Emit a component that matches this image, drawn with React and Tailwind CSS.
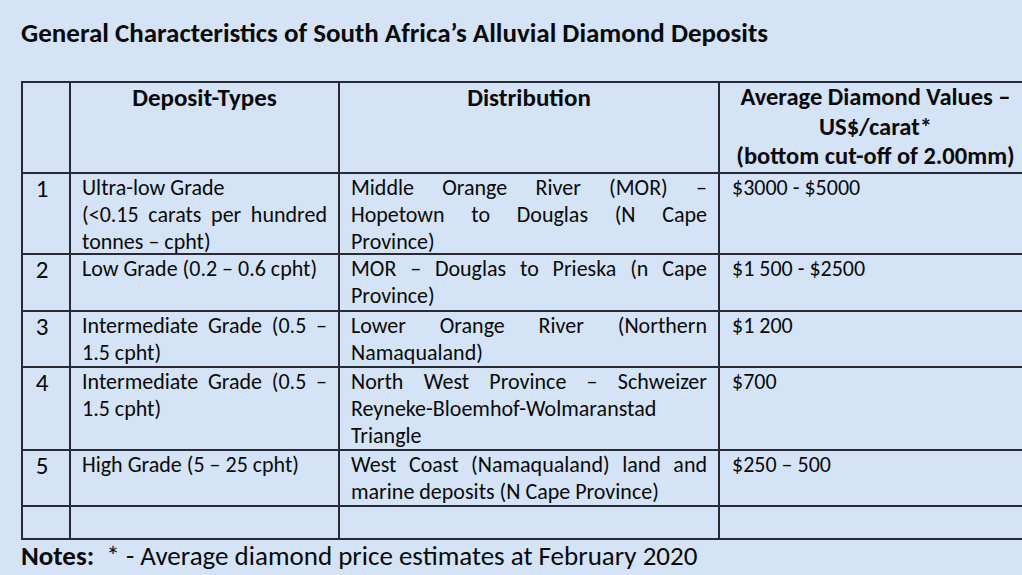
import React from "react";

const J = "text-justify [text-align-last:justify]";

function Lines({ lines, just, h }) {
  return (
    <div className={`${h} overflow-visible`}>
      {lines.map((l, i) => (
        <div key={i} className={just[i] ? J : ""}>
          {l}
        </div>
      ))}
    </div>
  );
}

const rows = [
  {
    n: "1",
    h: "h-[81px]",
    ih: "h-[79px]",
    type: ["Ultra-low Grade", "(<0.15 carats per hundred", "tonnes – cpht)"],
    typeJ: [false, true, false],
    dist: ["Middle Orange River (MOR) –", "Hopetown to Douglas (N Cape", "Province)"],
    distJ: [true, true, false],
    val: "$3000 - $5000",
  },
  {
    n: "2",
    h: "h-[57px]",
    ih: "h-[55px]",
    type: ["Low Grade (0.2 – 0.6 cpht)"],
    typeJ: [false],
    dist: ["MOR – Douglas to Prieska (n Cape", "Province)"],
    distJ: [true, false],
    val: "$1 500 - $2500",
  },
  {
    n: "3",
    h: "h-[56px]",
    ih: "h-[54px]",
    type: ["Intermediate Grade (0.5 –", "1.5 cpht)"],
    typeJ: [true, false],
    dist: ["Lower Orange River (Northern", "Namaqualand)"],
    distJ: [true, false],
    val: "$1 200",
  },
  {
    n: "4",
    h: "h-[83px]",
    ih: "h-[81px]",
    type: ["Intermediate Grade (0.5 –", "1.5 cpht)"],
    typeJ: [true, false],
    dist: ["North West Province – Schweizer", "Reyneke-Bloemhof-Wolmaranstad", "Triangle"],
    distJ: [true, false, false],
    val: "$700",
  },
  {
    n: "5",
    h: "h-[56px]",
    ih: "h-[54px]",
    type: ["High Grade (5 – 25 cpht)"],
    typeJ: [false],
    dist: ["West Coast (Namaqualand) land and", "marine deposits (N Cape Province)"],
    distJ: [true, false],
    val: "$250 – 500",
  },
];

const B = "border-2 border-[#2a2a35]";

export default function App() {
  const font = { fontFamily: "Carlito, Lato, 'Liberation Sans', sans-serif" };
  return (
    <div
      className="w-[1022px] h-[575px] overflow-hidden bg-[#d4e3f5] text-[#0a0a0a]"
      style={font}
    >
      <div className="pt-[17px] pl-[21px] text-[27px] font-bold leading-[32px] whitespace-nowrap">
        General Characteristics of South Africa’s Alluvial Diamond Deposits
      </div>
      <table className="ml-[21px] mt-[32px] w-[1009px] table-fixed border-collapse text-[22px] leading-[27px]">
        <colgroup>
          <col className="w-[48px]" />
          <col className="w-[269px]" />
          <col className="w-[380px]" />
          <col className="w-[312px]" />
        </colgroup>
        <tbody>
          <tr className="h-[91px]">
            <td className={B}></td>
            <td className={`${B} align-top text-center font-bold text-[25px] leading-[29.5px]`}>
              Deposit-Types
            </td>
            <td className={`${B} align-top text-center font-bold text-[25px] leading-[29.5px]`}>
              Distribution
            </td>
            <td className={`${B} border-r-0 align-top text-center font-bold text-[24.5px] leading-[29.5px] whitespace-nowrap`}>
              <div>Average Diamond Values –</div>
              <div>US$/carat*</div>
              <div>(bottom cut-off of 2.00mm)</div>
            </td>
          </tr>
          {rows.map((r) => (
            <tr key={r.n} className={r.h}>
              <td className={`${B} align-top text-center text-[25px] leading-[28px] pt-[1px] pr-[8px]`}>
                {r.n}
              </td>
              <td className={`${B} align-top pl-[11px] pr-[11px] whitespace-nowrap`}>
                <Lines lines={r.type} just={r.typeJ} h={r.ih} />
              </td>
              <td className={`${B} align-top pl-[11px] pr-[11px] whitespace-nowrap`}>
                <Lines lines={r.dist} just={r.distJ} h={r.ih} />
              </td>
              <td className={`${B} border-r-0 align-top pl-[12px] whitespace-nowrap`}>
                {r.val}
              </td>
            </tr>
          ))}
          <tr className="h-[33px]">
            <td className={B}></td>
            <td className={B}></td>
            <td className={B}></td>
            <td className={`${B} border-r-0`}></td>
          </tr>
        </tbody>
      </table>
      <div className="pl-[21px] text-[27px] leading-[32px] whitespace-nowrap">
        <span className="font-bold">Notes:</span>&nbsp; * - Average diamond price estimates at February 2020
      </div>
    </div>
  );
}
